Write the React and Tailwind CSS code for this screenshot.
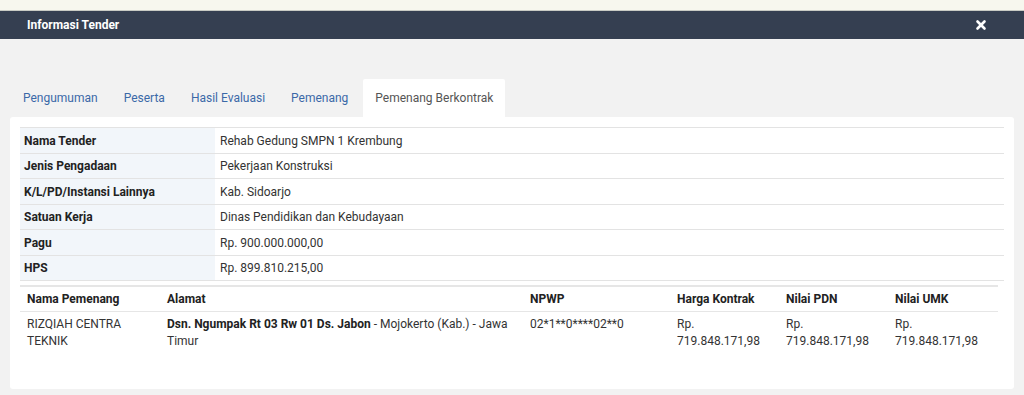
import { X } from 'lucide-react'

const info = [
  ['Nama Tender', 'Rehab Gedung SMPN 1 Krembung'],
  ['Jenis Pengadaan', 'Pekerjaan Konstruksi'],
  ['K/L/PD/Instansi Lainnya', 'Kab. Sidoarjo'],
  ['Satuan Kerja', 'Dinas Pendidikan dan Kebudayaan'],
  ['Pagu', 'Rp. 900.000.000,00'],
  ['HPS', 'Rp. 899.810.215,00'],
]

const tabs = ['Pengumuman', 'Peserta', 'Hasil Evaluasi', 'Pemenang']

export default function App() {
  return (
    <div className="w-[1024px] h-[395px] overflow-hidden bg-[#f2f2f2] text-[12px] text-[#333]" style={{ fontFamily: 'Roboto, "Liberation Sans", sans-serif' }}>
      {/* page strip behind modal */}
      <div className="h-[11px] bg-[#f7f7ee] border-b border-[#c9cbc4]" />

      {/* Header */}
      <div className="h-[28px] bg-[#353f51] flex items-center justify-between pl-[27px] pr-[36px]">
        <h3 className="text-[12px] font-bold text-white">Informasi Tender</h3>
        <button className="text-white">
          <X className="w-[14px] h-[14px]" strokeWidth={4.5} />
        </button>
      </div>

      {/* Body */}
      <div className="px-[10px] pt-[40px]">
        <div className="flex">
          {tabs.map((t) => (
            <div key={t} className="px-[13px] h-[38px] flex items-center text-[#3b69a8]">
              {t}
            </div>
          ))}
          <div className="ml-[2px] px-[12px] h-[38px] flex items-center bg-white text-[#555] rounded-t-[2px]">
            Pemenang Berkontrak
          </div>
        </div>

        <div className="bg-white rounded-[3px] px-[10px] pt-[10px] h-[272px]">
          <table className="w-full border-collapse">
            <tbody>
              {info.map(([k, v]) => (
                <tr key={k} className="border-t border-b border-[#e3e3e3] h-[25.5px]">
                  <td className="w-[195px] bg-[#f2f6fa] font-bold px-[4px] pt-[1px] text-[#222]">{k}</td>
                  <td className="px-[5px] pt-[1px]">{v}</td>
                </tr>
              ))}
            </tbody>
          </table>

          <table className="w-[978px] border-collapse mt-[4px]">
            <thead>
              <tr className="border-t-2 border-b border-[#e6e6e6] h-[25px] text-left">
                <th className="w-[140px] pl-[7px] font-bold text-[#222]">Nama Pemenang</th>
                <th className="w-[363px] pl-[7px] font-bold text-[#222]">Alamat</th>
                <th className="w-[147px] pl-[7px] font-bold text-[#222]">NPWP</th>
                <th className="w-[109px] pl-[7px] font-bold text-[#222]">Harga Kontrak</th>
                <th className="w-[109px] pl-[7px] font-bold text-[#222]">Nilai PDN</th>
                <th className="pl-[7px] font-bold text-[#222]">Nilai UMK</th>
              </tr>
            </thead>
            <tbody>
              <tr className="align-top leading-[17px]">
                <td className="pl-[7px] pt-[4px]">RIZQIAH CENTRA TEKNIK</td>
                <td className="pl-[7px] pt-[4px] pr-[4px]">
                  <b className="text-[#222]">Dsn. Ngumpak Rt 03 Rw 01 Ds. Jabon</b> - Mojokerto (Kab.) - Jawa Timur
                </td>
                <td className="pl-[7px] pt-[4px]">02*1**0****02**0</td>
                <td className="pl-[7px] pt-[4px]">Rp. 719.848.171,98</td>
                <td className="pl-[7px] pt-[4px]">Rp. 719.848.171,98</td>
                <td className="pl-[7px] pt-[4px]">Rp. 719.848.171,98</td>
              </tr>
            </tbody>
          </table>
        </div>
      </div>
    </div>
  )
}
